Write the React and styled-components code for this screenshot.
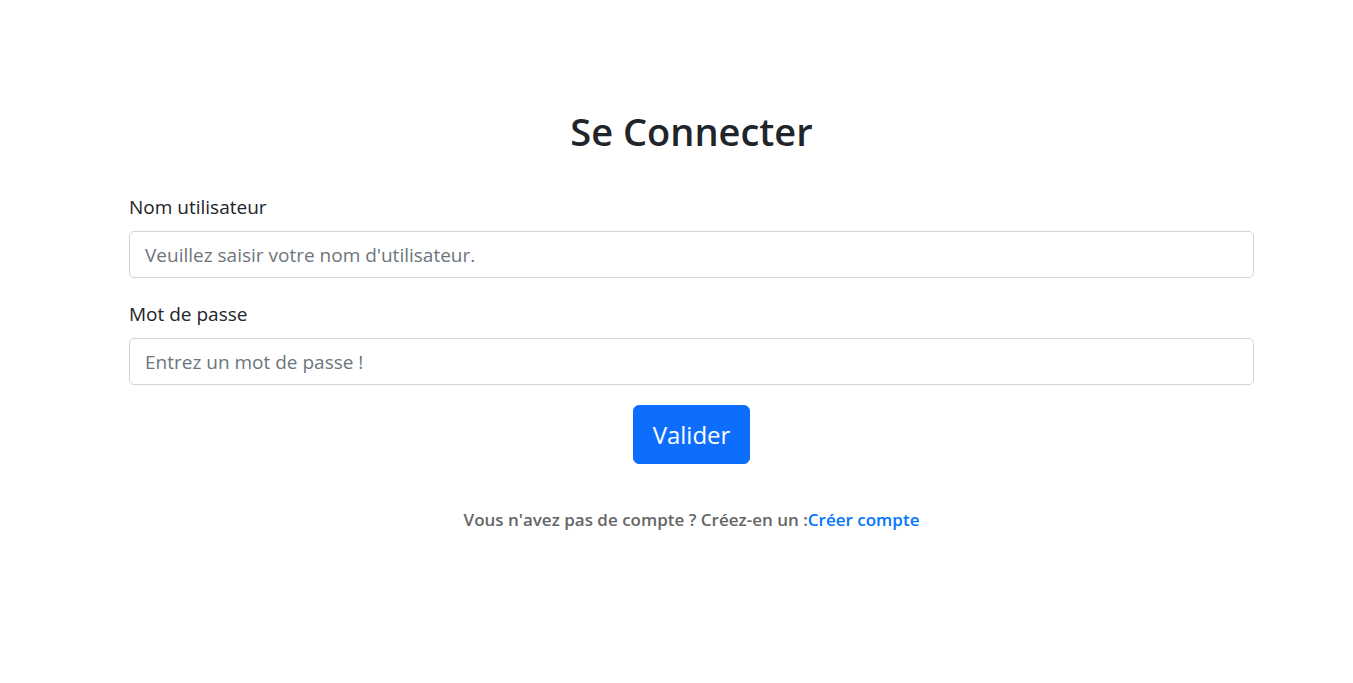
import React from "react";
import styled, { createGlobalStyle } from "styled-components";

const GlobalStyle = createGlobalStyle`
  *, *::before, *::after { box-sizing: border-box; }
  body {
    margin: 0;
    background: #fff;
    color: #212529;
    font-family: "Open Sans", "Noto Sans", sans-serif;
    font-size: 19px;
    line-height: 30px;
  }
`;

const Page = styled.main`
  padding: 107px 99px 40px 129px;
`;

const Title = styled.h1`
  margin: 0 0 36px;
  font-size: 38px;
  line-height: 48px;
  font-weight: 600;
  text-align: center;
`;

const Form = styled.form`
  display: flex;
  flex-direction: column;
  gap: 20px;
`;

const Field = styled.div`
  display: flex;
  flex-direction: column;
  gap: 8px;
`;

const Label = styled.label`
  line-height: 32px;
`;

const Input = styled.input`
  width: 100%;
  height: 47px;
  padding: 7px 15px;
  border: 1px solid #ced4da;
  border-radius: 5px;
  background: #fff;
  color: #212529;
  font: inherit;
  &::placeholder { color: #6c757d; opacity: 1; }
`;

const Button = styled.button`
  align-self: center;
  height: 59px;
  padding: 0 19px;
  border: 1px solid #0d6efd;
  border-radius: 6px;
  background: #0d6efd;
  color: #fff;
  font: inherit;
  font-size: 24px;
  line-height: 38px;
  cursor: pointer;
`;

const Note = styled.p`
  margin: 42px 0 0;
  font-size: 17px;
  line-height: 28px;
  font-weight: 600;
  text-align: center;
  color: #666;
`;

const Link = styled.a`
  color: #0275ff;
  text-decoration: none;
`;

export default function App() {
  return (
    <>
      <GlobalStyle />
      <Page>
        <Title>Se Connecter</Title>
        <Form onSubmit={(e) => e.preventDefault()}>
          <Field>
            <Label htmlFor="username">Nom utilisateur</Label>
            <Input id="username" type="text" placeholder="Veuillez saisir votre nom d'utilisateur." />
          </Field>
          <Field>
            <Label htmlFor="password">Mot de passe</Label>
            <Input id="password" type="password" placeholder="Entrez un mot de passe !" />
          </Field>
          <Button type="submit">Valider</Button>
        </Form>
        <Note>
          Vous n'avez pas de compte ? Créez-en un :<Link href="#signup">Créer compte</Link>
        </Note>
      </Page>
    </>
  );
}
